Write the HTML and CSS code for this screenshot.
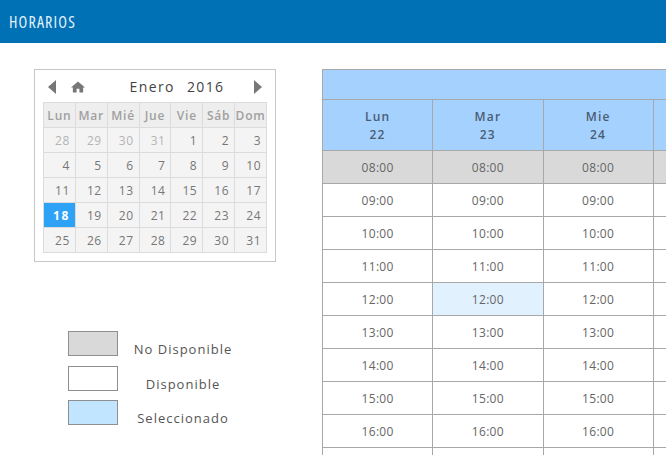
FILE: index.html
```html
<!DOCTYPE html>
<html lang="es">

<head>
  <meta charset="UTF-8">
  <title>Horarios</title>
  <link rel="stylesheet" href="styles.css">
</head>

<body>
  <header class="topbar"><h1>HORARIOS</h1></header>
  <div class="page">
    <div class="side">
      <div class="calendar">
        <div class="calHead">
          <svg class="arrow" width="8" height="14" viewBox="0 0 8 14"><path d="M8 0V14L0 7Z"/></svg>
          <svg class="home" width="14" height="12" viewBox="0 0 15 12"><path d="M7.5 0L15 6.6H13V12H9V8H6V12H2V6.6H0Z"/></svg>
          <span class="calTitle"><span>Enero</span><span>2016</span></span>
          <svg class="arrow" width="8" height="14" viewBox="0 0 8 14"><path d="M0 0V14L8 7Z"/></svg>
        </div>
        <table class="month">
          <tr><th>Lun</th><th>Mar</th><th>Mié</th><th>Jue</th><th>Vie</th><th>Sáb</th><th>Dom</th></tr>
          <tr><td class="old">28</td><td class="old">29</td><td class="old">30</td><td class="old">31</td><td>1</td><td>2</td><td>3</td></tr>
          <tr><td>4</td><td>5</td><td>6</td><td>7</td><td>8</td><td>9</td><td>10</td></tr>
          <tr><td>11</td><td>12</td><td>13</td><td>14</td><td>15</td><td>16</td><td>17</td></tr>
          <tr><td class="today">18</td><td>19</td><td>20</td><td>21</td><td>22</td><td>23</td><td>24</td></tr>
          <tr><td>25</td><td>26</td><td>27</td><td>28</td><td>29</td><td>30</td><td>31</td></tr>
        </table>
      </div>
      <ul class="legend">
        <li><i class="busy"></i><span>No Disponible</span></li>
        <li><i></i><span>Disponible</span></li>
        <li><i class="chosen"></i><span>Seleccionado</span></li>
      </ul>
    </div>
    <div class="hoursWrap">
      <table class="hours">
        <tr class="band"><th colspan="4"></th></tr>
        <tr class="days"><th>Lun<br>22</th><th>Mar<br>23</th><th>Mie<br>24</th><th></th></tr>
        <tr class="busy"><td>08:00</td><td>08:00</td><td>08:00</td><td></td></tr>
        <tr><td>09:00</td><td>09:00</td><td>09:00</td><td></td></tr>
        <tr><td>10:00</td><td>10:00</td><td>10:00</td><td></td></tr>
        <tr><td>11:00</td><td>11:00</td><td>11:00</td><td></td></tr>
        <tr><td>12:00</td><td class="picked">12:00</td><td>12:00</td><td></td></tr>
        <tr><td>13:00</td><td>13:00</td><td>13:00</td><td></td></tr>
        <tr><td>14:00</td><td>14:00</td><td>14:00</td><td></td></tr>
        <tr><td>15:00</td><td>15:00</td><td>15:00</td><td></td></tr>
        <tr><td>16:00</td><td>16:00</td><td>16:00</td><td></td></tr>
        <tr><td></td><td></td><td></td><td></td></tr>
      </table>
    </div>
  </div>
</body>

</html>
```

FILE: styles.css
```css
* {
  margin: 0;
  padding: 0;
  box-sizing: border-box;
  list-style: none;
}

html,
body {
  height: 455px;
  overflow: hidden;
}

body {
  font-family: "Open Sans", "Liberation Sans", sans-serif;
  background-color: #fff;
  color: #555;
}

.topbar {
  height: 43px;
  padding: 12px 9px 0;
  background-color: #0071b5;
}

.topbar h1 {
  font-size: 16px;
  line-height: 20px;
  font-weight: 400;
  font-stretch: condensed;
  letter-spacing: 1.15px;
  color: #e4f2fb;
}

.page {
  display: flex;
  align-items: flex-start;
  height: 412px;
  padding: 26px 0 0 34px;
  overflow: hidden;
}

.side {
  flex: none;
  width: 288px;
}

/* calendario */
.calendar {
  width: 242px;
  height: 193px;
  padding: 0 8px;
  border: 1px solid #c8c8c8;
}

.calHead {
  display: flex;
  align-items: center;
  height: 32px;
  padding: 2px 5px 0 5px;
}

.arrow {
  fill: #777;
}

.home {
  margin-left: 15px;
  fill: #777;
}

.calTitle {
  display: flex;
  flex: 1;
  justify-content: center;
  gap: 12px;
  padding: 0 0 2px 15px;
  font-size: 14px;
  font-weight: 500;
  letter-spacing: 1.4px;
  color: #444;
}

.month {
  width: 224px;
  height: 151px;
  table-layout: fixed;
  border-collapse: collapse;
  background-color: #f4f4f4;
}

.month th,
.month td {
  height: 25px;
  border: 1px solid #dcdcdc;
  font-size: 12px;
  font-weight: 400;
  text-align: right;
  padding-right: 5px;
  letter-spacing: .5px;
  color: #777;
}

.month th {
  padding: 0;
  text-align: center;
  font-weight: 600;
  letter-spacing: .8px;
  color: #a0a0a0;
  background-color: #eee;
}

.month td.old {
  color: #b4b4b4;
}

.month td.today {
  background-color: #2ea2f5;
  color: #fff;
  font-weight: 700;
  letter-spacing: 1.5px;
}

/* leyenda */
.legend {
  width: 180px;
  margin: 69px 0 0 34px;
}

.legend li {
  display: flex;
  align-items: center;
  height: 25px;
  margin-bottom: 9.5px;
}

.legend i {
  flex: none;
  width: 50px;
  height: 25px;
  border: 1px solid #8f8f8f;
  background-color: #fff;
}

.legend i.busy {
  background-color: #d9d9d9;
}

.legend i.chosen {
  background-color: #c2e5ff;
}

.legend span {
  flex: 1;
  padding-top: 11px;
  text-align: center;
  font-size: 13px;
  letter-spacing: 1px;
  color: #555;
}

/* tabla de horas */
.hoursWrap {
  flex: 1;
  min-width: 0;
  height: 386px;
  overflow: hidden;
}

.hours {
  width: 442px;
  table-layout: fixed;
  border-collapse: collapse;
}

.hours th,
.hours td {
  border: 1px solid #a8a8a8;
  text-align: center;
}

.hours th {
  font-size: 12px;
  line-height: 18px;
  font-weight: 600;
  letter-spacing: 1.2px;
  color: #4a5c74;
  background-color: #a5d1fe;
}

.band th {
  height: 30px;
}

.days th {
  height: 51px;
  padding-top: 1px;
}

.hours td {
  height: 33px;
  font-size: 12px;
  letter-spacing: .3px;
  color: #666;
}

.hours .busy td {
  background-color: #d9d9d9;
}

.hours td.picked {
  background-color: #e1f1fe;
}
```
